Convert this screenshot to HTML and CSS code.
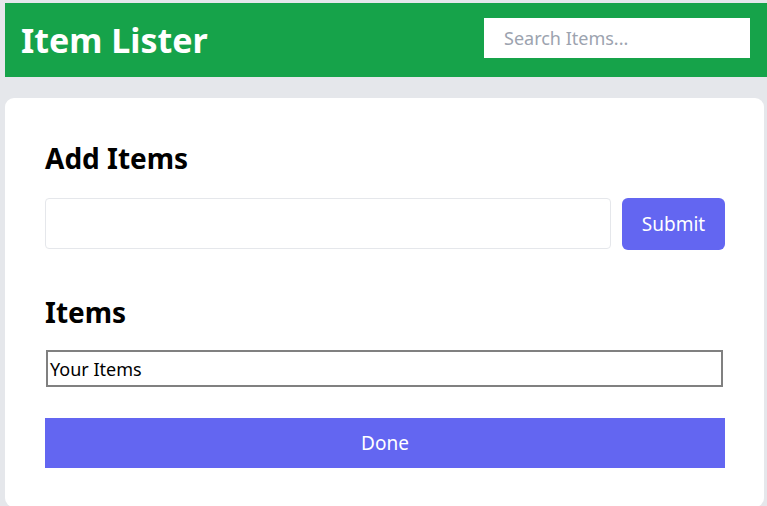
FILE: index.html
```html
<!DOCTYPE html>
<html>
<head>
<meta charset="utf-8">
<link rel="stylesheet" href="styles.css">
</head>
<body>
<header class="header">
  <h1 class="title">Item Lister</h1>
  <input class="search" type="text" placeholder="Search Items...">
</header>
<main class="card">
  <h2 class="heading">Add Items</h2>
  <form class="add-form">
    <input class="add-input" type="text">
    <button class="submit" type="button">Submit</button>
  </form>
  <h2 class="heading items-heading">Items</h2>
  <ul class="list">
    <li class="list-item">Your Items</li>
  </ul>
  <button class="done" type="button">Done</button>
</main>
</body>
</html>
```
FILE: styles.css
```css
* { box-sizing: border-box; }
html, body { height: 100%; }
body {
  margin: 0;
  padding: 3px 0 0 5px;
  background: #e5e7eb;
  font-family: "Noto Sans", "Open Sans", sans-serif;
  overflow: hidden;
}
.header {
  height: 74px;
  background: #16a34a;
  display: flex;
  align-items: center;
  justify-content: space-between;
  padding: 0 17px 0 16px;
}
.title {
  margin: 0;
  color: #fff;
  font-size: 34px;
  font-weight: 700;
}
.search {
  width: 266px;
  height: 40px;
  border: none;
  padding: 0 20px;
  font-family: inherit;
  font-size: 18px;
  outline: none;
  margin-top: -4px;
}
.search::placeholder { color: #9ca3af; }
.card {
  background: #fff;
  margin: 21px 3px 0 0;
  border-radius: 9px;
  padding: 40px 39px 40px 40px;
  height: 409px;
}
.heading {
  margin: 0;
  font-size: 28px;
  font-weight: 700;
  color: #000;
  line-height: 40px;
}
.add-form {
  display: flex;
  gap: 11px;
  margin-top: 20px;
}
.add-input {
  flex: 1;
  height: 51px;
  border: 1px solid #e5e7eb;
  border-radius: 4px;
}
.submit {
  width: 103px;
  height: 52px;
  background: #6366f1;
  color: #fff;
  border: none;
  border-radius: 6px;
  font-family: inherit;
  font-size: 19px;
}
.items-heading { margin-top: 42px; }
.list {
  list-style: none;
  margin: 18px 2px 0 1px;
  padding: 0;
}
.list-item {
  border: 2px solid #808080;
  height: 37px;
  padding: 0 2px;
  font-size: 18px;
  line-height: 34px;
  color: #000;
}
.done {
  display: block;
  width: 100%;
  height: 50px;
  margin-top: 31px;
  background: #6366f1;
  color: #fff;
  border: none;
  font-family: inherit;
  font-size: 19px;
}
```
